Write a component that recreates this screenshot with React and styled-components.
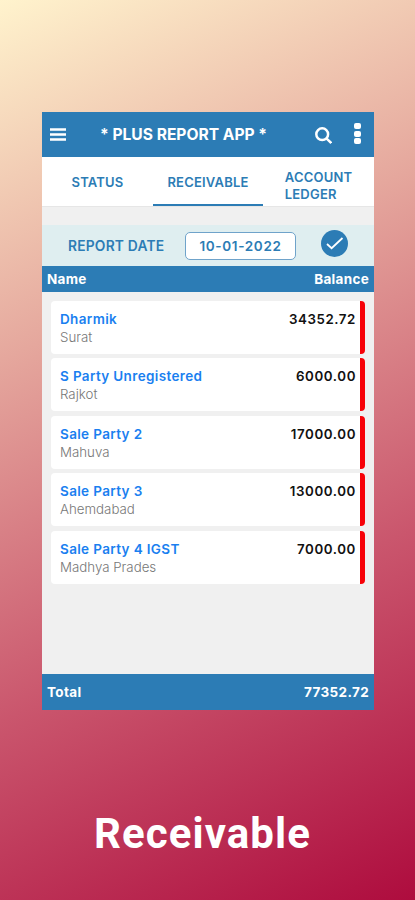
import React from "react";
import styled, { createGlobalStyle } from "styled-components";

const parties = [
  { name: "Dharmik", city: "Surat", balance: "34352.72" },
  { name: "S Party Unregistered", city: "Rajkot", balance: "6000.00" },
  { name: "Sale Party 2", city: "Mahuva", balance: "17000.00" },
  { name: "Sale Party 3", city: "Ahemdabad", balance: "13000.00" },
  { name: "Sale Party 4 IGST", city: "Madhya Prades", balance: "7000.00" },
];

export default function App() {
  return (
    <Page>
      <GlobalStyle />
      <Phone>
        <TopBar>
          <MenuIcon viewBox="0 0 16 13">
            <path d="M0 1.5h16M0 6.5h16M0 11.5h16" />
          </MenuIcon>
          <AppTitle>* PLUS REPORT APP *</AppTitle>
          <SearchIcon viewBox="0 0 17 17">
            <circle cx="7.2" cy="7.2" r="5.9" />
            <path d="M11.4 11.4l4.9 4.6" />
          </SearchIcon>
          <Dots>
            <Dot />
            <Dot />
            <Dot />
          </Dots>
        </TopBar>
        <Tabs>
          <Tab>STATUS</Tab>
          <Tab $active>RECEIVABLE</Tab>
          <Tab $wrapped>
            ACCOUNT
            <br />
            LEDGER
          </Tab>
        </Tabs>
        <DateBar>
          <DateLabel>REPORT DATE</DateLabel>
          <DateInput>10-01-2022</DateInput>
          <Confirm>
            <svg width="27" height="27" viewBox="0 0 27 27" fill="none">
              <path d="M6 14l4.6 4.2L21.5 8" stroke="#fff" strokeWidth="1.8" />
            </svg>
          </Confirm>
        </DateBar>
        <TableHead>
          <span>Name</span>
          <span>Balance</span>
        </TableHead>
        <List>
          {parties.map((party) => (
            <Card key={party.name}>
              <div>
                <Name>{party.name}</Name>
                <City>{party.city}</City>
              </div>
              <Balance>{party.balance}</Balance>
            </Card>
          ))}
        </List>
        <Footer>
          <span>Total</span>
          <span>77352.72</span>
        </Footer>
      </Phone>
      <Caption>Receivable</Caption>
    </Page>
  );
}

const GlobalStyle = createGlobalStyle`
  * {
    box-sizing: border-box;
  }
  body {
    margin: 0;
    font-family: Inter, "Liberation Sans", sans-serif;
  }
`;

const Page = styled.div`
  width: 415px;
  height: 900px;
  padding-top: 112px;
  display: flex;
  flex-direction: column;
  align-items: center;
  overflow: hidden;
  background: linear-gradient(155deg, #fff3cd 0%, #e5a79d 33%, #ca566d 66%, #ae0c3e 100%);
`;

const Phone = styled.div`
  width: 332px;
  height: 598px;
  display: flex;
  flex-direction: column;
  margin-left: 1px;
  background: #f0f0f0;
`;

const TopBar = styled.header`
  height: 45px;
  flex-shrink: 0;
  padding: 0 13px 0 8px;
  display: flex;
  align-items: center;
  background: #2c7cb5;
  color: #fff;
`;

const MenuIcon = styled.svg`
  width: 16px;
  height: 13px;
  stroke: #fff;
  stroke-width: 2.6;
`;

const AppTitle = styled.h1`
  margin: 0 auto 0 34px;
  font-size: 15.6px;
  font-weight: 650;
  white-space: nowrap;
`;

const SearchIcon = styled.svg`
  width: 17px;
  height: 17px;
  margin-right: 22px;
  margin-top: 1px;
  fill: none;
  stroke: #fff;
  stroke-width: 2.5;
`;

const Dots = styled.div`
  display: grid;
  gap: 1.5px;
  margin-top: -2px;
`;

const Dot = styled.span`
  width: 7px;
  height: 6px;
  border-radius: 2px;
  background: #fff;
`;

const Tabs = styled.nav`
  height: 50px;
  flex-shrink: 0;
  display: grid;
  grid-template-columns: 111px 110px 111px;
  background: #fff;
  border-bottom: 1px solid #e6e6e6;
`;

const Tab = styled.div`
  display: flex;
  align-items: center;
  justify-content: center;
  padding-top: ${(props) => (props.$wrapped ? "10px" : "3px")};
  border-bottom: 2px solid ${(props) => (props.$active ? "#2c7cb5" : "transparent")};
  color: #2c7cb5;
  font-size: 13px;
  font-weight: 600;
  line-height: 16.5px;
  letter-spacing: 0.2px;
`;

const DateBar = styled.div`
  height: 41px;
  flex-shrink: 0;
  margin-top: 18px;
  padding: 0 26px 0 26px;
  display: flex;
  align-items: center;
  background: #dfeef0;
  color: #2c7cb5;
  font-weight: 600;
`;

const DateLabel = styled.span`
  width: 117px;
  font-size: 13.8px;
  letter-spacing: 0.2px;
  white-space: nowrap;
`;

const DateInput = styled.div`
  width: 111px;
  height: 28px;
  display: flex;
  align-items: center;
  justify-content: center;
  border: 1px solid #6fa3ca;
  border-radius: 5px;
  background: #fff;
  font-size: 13.5px;
  letter-spacing: 0.65px;
`;

const Confirm = styled.div`
  width: 27px;
  height: 27px;
  margin: -5px 0 0 auto;
  border-radius: 50%;
  background: #2c7cb5;
`;

const TableHead = styled.div`
  height: 26px;
  flex-shrink: 0;
  padding: 0 5px;
  display: flex;
  align-items: center;
  justify-content: space-between;
  background: #2c7cb5;
  color: #fff;
  font-size: 13.5px;
  font-weight: 700;
  letter-spacing: 0.3px;
`;

const List = styled.div`
  flex: 1;
  padding: 9px 9px 0;
  display: flex;
  flex-direction: column;
  gap: 4.4px;
`;

const Card = styled.div`
  height: 53px;
  padding: 10px 4px 0 9px;
  display: flex;
  justify-content: space-between;
  border-right: 5px solid #f70208;
  border-radius: 4px;
  background: #fff;
`;

const Name = styled.div`
  color: #1a7ff0;
  font-size: 13.5px;
  font-weight: 600;
  line-height: 17px;
  letter-spacing: 0.35px;
`;

const City = styled.div`
  color: #777;
  font-size: 13.3px;
  font-weight: 300;
  line-height: 18px;
`;

const Balance = styled.div`
  color: #111;
  font-size: 13.3px;
  font-weight: 600;
  line-height: 17px;
  letter-spacing: 0.6px;
`;

const Footer = styled(TableHead)`
  height: 36px;
  letter-spacing: 0.35px;
`;

const Caption = styled.h2`
  margin: 98px 0 0;
  padding-right: 10px;
  color: #fff;
  font-family: Roboto, sans-serif;
  font-size: 42px;
  font-weight: 700;
  line-height: 52px;
  letter-spacing: 1.1px;
`;
